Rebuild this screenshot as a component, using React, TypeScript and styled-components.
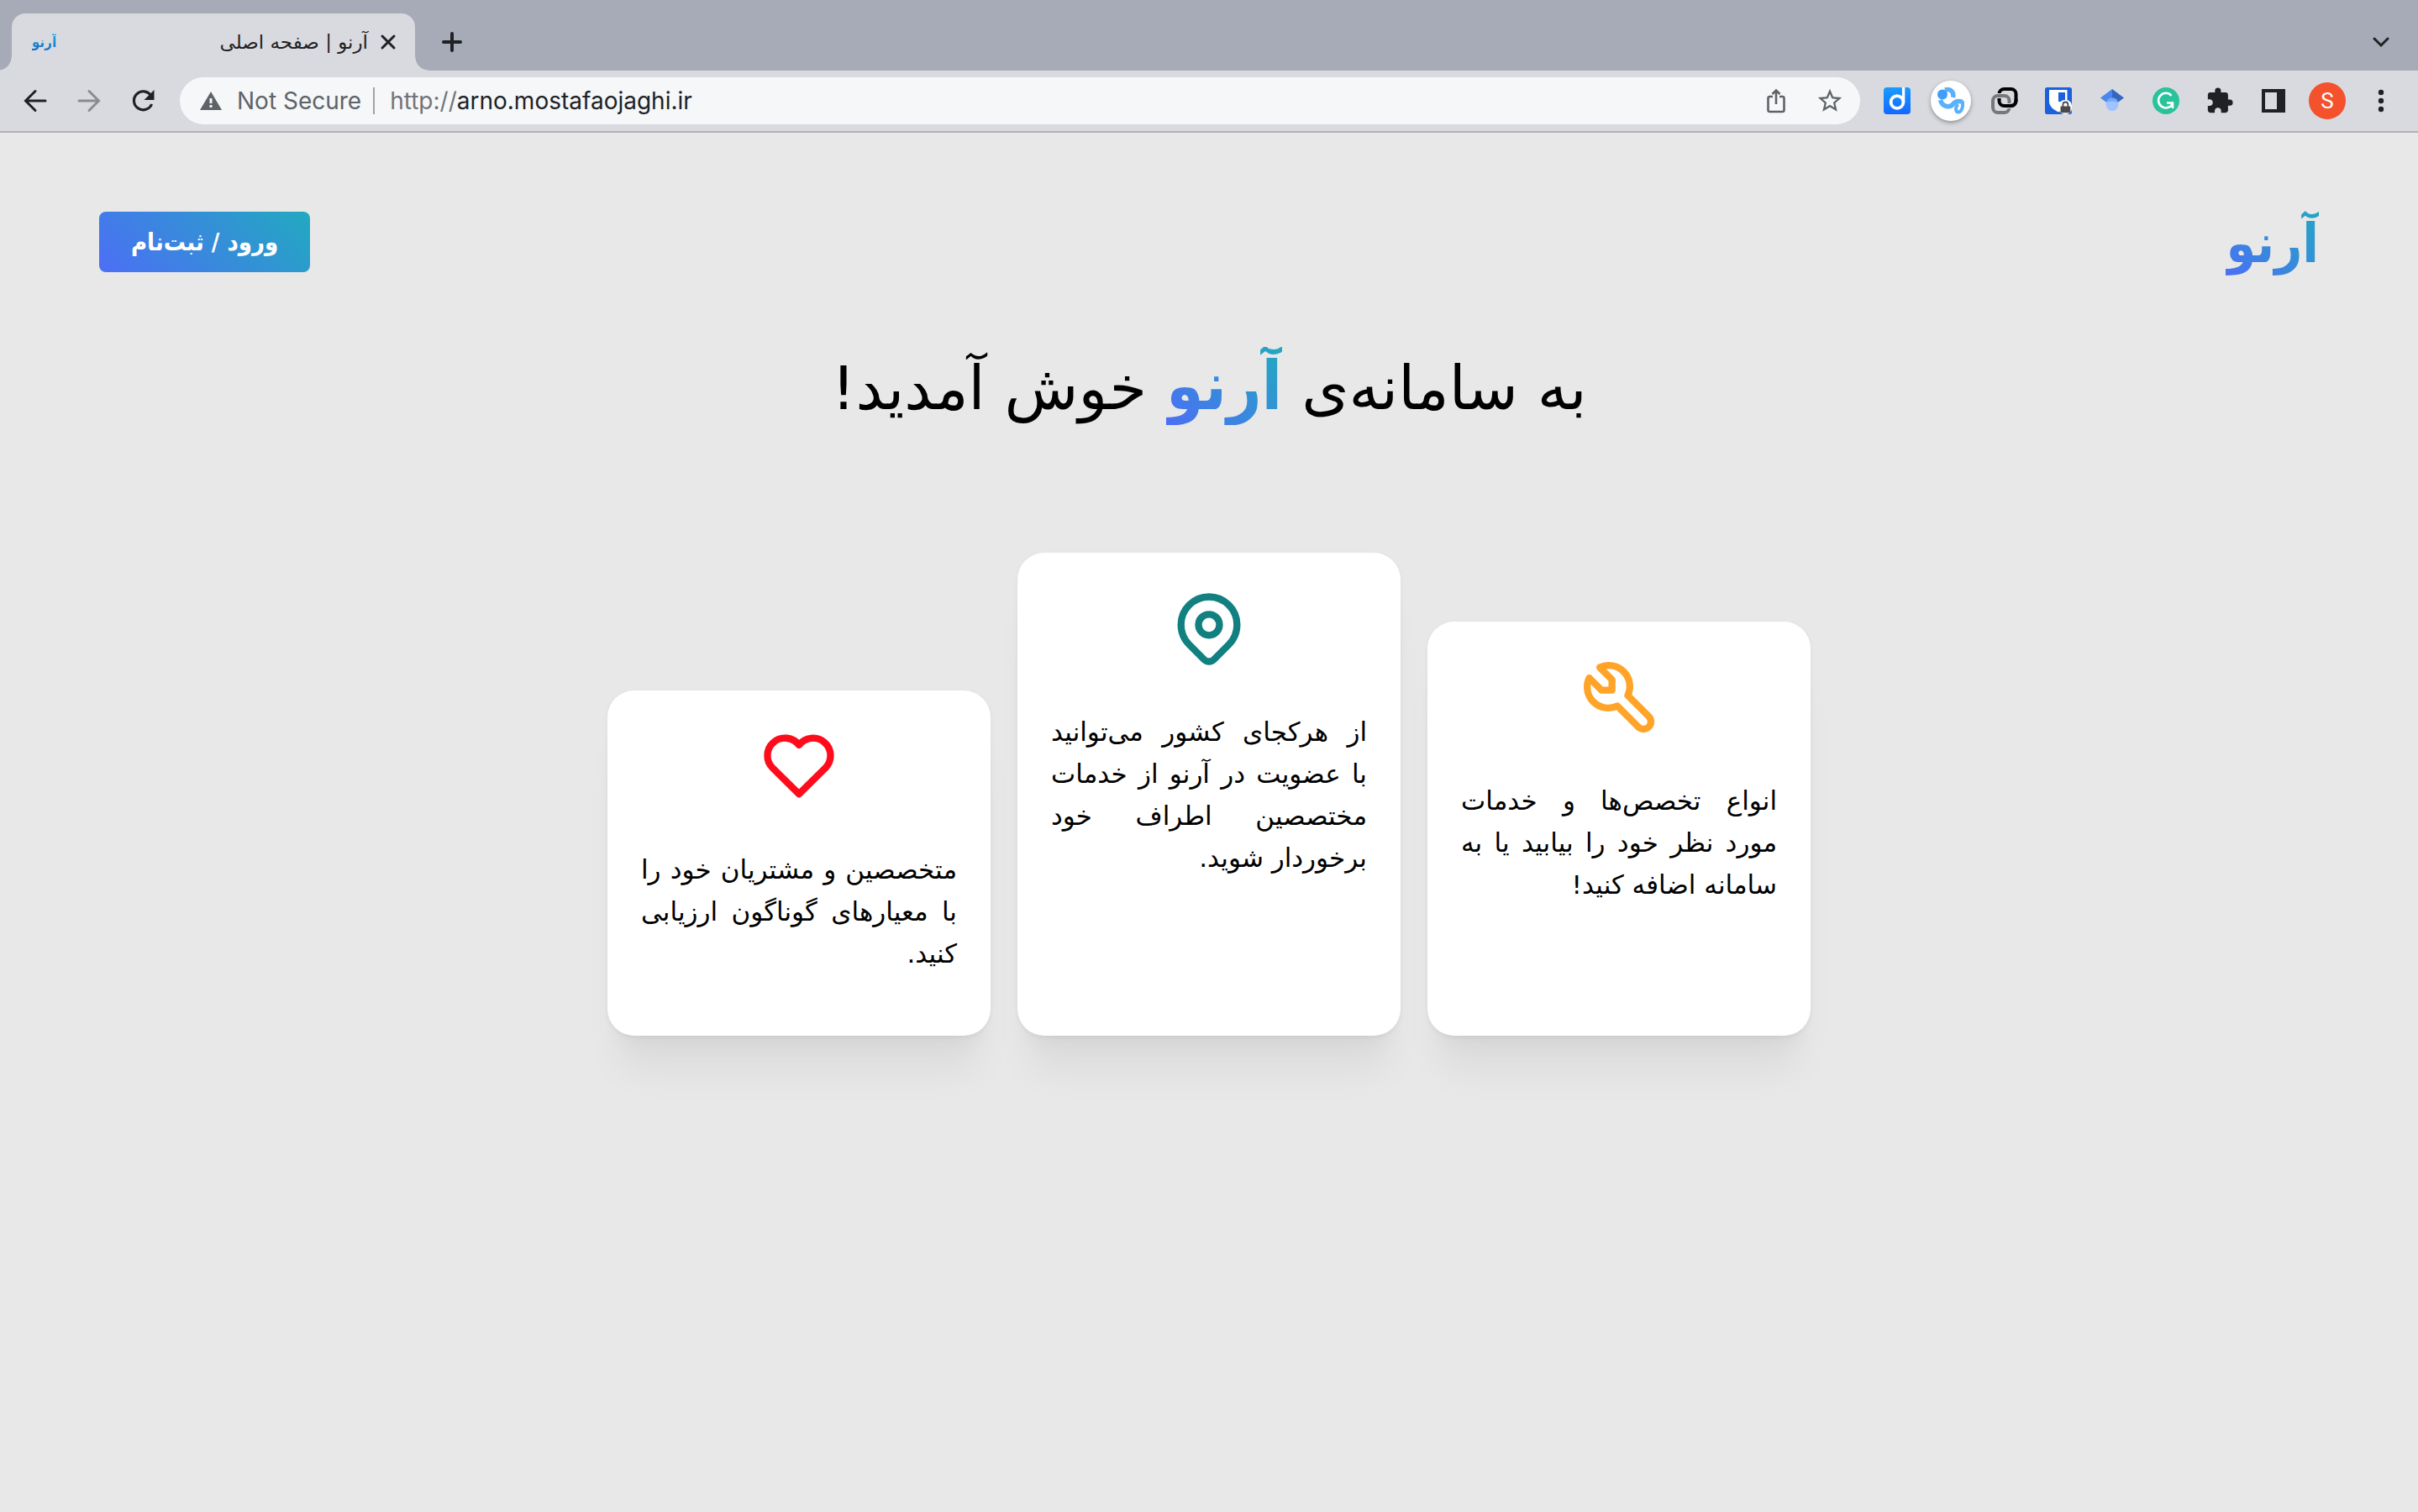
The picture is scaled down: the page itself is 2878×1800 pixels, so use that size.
import React from "react";
import styled, { createGlobalStyle } from "styled-components";

const GlobalStyle = createGlobalStyle`
  *, *::before, *::after { box-sizing: border-box; }
  body { margin: 0; background: #e8e8e8; }
  button, input { font: inherit; color: inherit; border: 0; margin: 0; padding: 0; background: none; }
  button { cursor: pointer; }
  svg { display: block; flex: none; }
`;

const persian = `"DejaVu Sans", "Noto Sans", sans-serif`;
const persianBold = `"DejaVu Sans Condensed", "DejaVu Sans", sans-serif`;
const latin = `Inter, Roboto, "Liberation Sans", sans-serif`;
const brandGradient = "linear-gradient(45deg, #4c6ef5 0%, #22a9c0 100%)";

/* ---------- browser window ---------- */

const TabStrip = styled.div`
  display: flex;
  align-items: flex-end;
  height: 84px;
  padding: 0 22px 0 14px;
  background: #a7abb7;
`;

const Tab = styled.div`
  position: relative;
  display: flex;
  align-items: center;
  width: 480px;
  height: 68px;
  padding: 0 20px 0 24px;
  border-radius: 16px 16px 0 0;
  background: #d9dadf;

  &::before,
  &::after {
    content: "";
    position: absolute;
    bottom: 0;
    width: 16px;
    height: 16px;
  }
  &::before {
    right: 100%;
    background: radial-gradient(circle at 0 0, transparent 15px, #d9dadf 16px);
  }
  &::after {
    left: 100%;
    background: radial-gradient(circle at 100% 0, transparent 15px, #d9dadf 16px);
  }
`;

const Favicon = styled.span`
  font: bold 17px/28px ${persianBold};
  color: transparent;
  background: linear-gradient(#22b8ec, #1560b8);
  background-clip: text;
`;

const TabTitle = styled.span`
  flex: 1;
  padding-right: 12px;
  font: 23px/32px ${persian};
  color: #202124;
  text-align: right;
`;

const IconButton = styled.button<{ $size?: number; $color?: string }>`
  display: flex;
  align-items: center;
  justify-content: center;
  flex: none;
  width: ${(p) => p.$size ?? 64}px;
  height: ${(p) => p.$size ?? 64}px;
  color: ${(p) => p.$color ?? "#202124"};
`;

const NewTab = styled(IconButton)`
  margin: 0 auto 2px 12px;
`;

const TabSearch = styled(IconButton)`
  margin-bottom: 12px;
`;

const Toolbar = styled.div`
  display: flex;
  align-items: center;
  height: 74px;
  padding: 0 12px 0 10px;
  border-bottom: 2px solid #b0b1b5;
  background: #d9dadf;
`;

const Omnibox = styled.form`
  display: flex;
  align-items: center;
  flex: 1;
  height: 56px;
  margin: 0 12px;
  padding: 0 4px 0 24px;
  border-radius: 28px;
  background: #f5f7f9;
  font: 28px/36px ${latin};
`;

const Security = styled.button`
  display: flex;
  align-items: center;
  gap: 18px;
  color: #5f6368;
`;

const Divider = styled.span`
  width: 2px;
  height: 32px;
  margin: 0 18px 0 14px;
  background: #a0a2a6;
`;

const Scheme = styled.label`
  color: #717478;
`;

const Address = styled.input`
  flex: 1;
  min-width: 0;
  color: #202124;
  outline: none;
`;

const Badge = styled.span<{ $size: number; $bg: string; $raised?: boolean }>`
  display: flex;
  align-items: center;
  justify-content: center;
  width: ${(p) => p.$size}px;
  height: ${(p) => p.$size}px;
  border-radius: 50%;
  background: ${(p) => p.$bg};
  color: #fff;
  font: 26px/32px Roboto, sans-serif;
  box-shadow: ${(p) => (p.$raised ? "0 2px 5px rgba(0, 0, 0, 0.35)" : "none")};
`;

/* ---------- site ---------- */

const Page = styled.main`
  padding: 80px 118px;
  font-family: ${persian};
  color: #000;
`;

const Header = styled.header`
  display: flex;
  align-items: center;
  justify-content: space-between;
`;

const Brand = styled.span`
  color: transparent;
  background: ${brandGradient};
  background-clip: text;
  font-family: ${persianBold};
  font-weight: bold;
`;

const Logo = styled(Brand)`
  padding-top: 4px;
  font-size: 64px;
  line-height: 96px;
`;

const LoginButton = styled.button`
  height: 72px;
  padding: 0 38px;
  border-radius: 8px;
  background: ${brandGradient};
  color: #fff;
  font-family: ${persianBold};
  font-size: 29px;
  font-weight: bold;
`;

const Title = styled.h1`
  margin: 66px 0 0;
  font-size: 72px;
  font-weight: normal;
  line-height: 112px;
  text-align: center;
`;

const TitleBrand = styled(Brand)`
  font-size: 80px;
`;

const Cards = styled.section`
  display: flex;
  justify-content: center;
  align-items: flex-end;
  gap: 32px;
  margin-top: 140px;
`;

const Card = styled.article<{ $height: number }>`
  width: 456px;
  min-height: ${(p) => p.$height}px;
  padding: 40px;
  border-radius: 32px;
  background: #fff;
  box-shadow:
    0 2px 6px rgba(0, 0, 0, 0.05),
    0 56px 46px -14px rgba(0, 0, 0, 0.05),
    0 24px 24px -14px rgba(0, 0, 0, 0.04);
`;

const CardIcon = styled.svg<{ $color: string }>`
  width: 100px;
  height: 100px;
  margin: 0 auto 48px;
  fill: none;
  stroke: ${(p) => p.$color};
  stroke-width: 2;
  stroke-linecap: round;
  stroke-linejoin: round;
`;

const CardText = styled.p`
  margin: 0;
  font-size: 31px;
  line-height: 50px;
  text-align: justify;
`;

const features = [
  {
    height: 493,
    color: "#ffa428",
    icon: (
      <path d="M7 10h3v-3l-3.5 -3.5a6 6 0 0 1 8 8l6 6a2 2 0 0 1 -3 3l-6 -6a6 6 0 0 1 -8 -8l3.5 3.5" />
    ),
    text: "انواع تخصص‌ها و خدمات مورد نظر خود را بیابید یا به سامانه اضافه کنید!",
  },
  {
    height: 575,
    color: "#128080",
    icon: (
      <>
        <circle cx="12" cy="11" r="3" />
        <path d="M17.657 16.657l-4.243 4.243a2 2 0 0 1 -2.827 0l-4.244 -4.243a8 8 0 1 1 11.314 0z" />
      </>
    ),
    /* the preposition stays on the line of its noun */
    text: "از هرکجای کشور می‌توانید با\u00a0عضویت در آرنو از خدمات مختصصین اطراف خود برخوردار شوید.",
  },
  {
    height: 411,
    color: "#ff0c1c",
    icon: (
      <path d="M19.5 12.572l-7.5 7.428l-7.5 -7.428m0 0a5 5 0 1 1 7.5 -6.566a5 5 0 1 1 7.5 6.572" />
    ),
    text: "متخصصین و مشتریان خود را با معیارهای گوناگون ارزیابی کنید.",
  },
];

const Line = ({ d, size, width = 4 }: { d: string; size: number; width?: number }) => (
  <svg width={size} height={size} viewBox={`0 0 ${size} ${size}`} fill="none" stroke="currentColor" strokeWidth={width} strokeLinecap="round">
    <path d={d} />
  </svg>
);

const extensions = [
  {
    name: "Dictionary",
    icon: (
      <svg width="32" height="32" viewBox="0 0 32 32">
        <defs>
          <linearGradient id="dict" x1="0" y1="0" x2="0" y2="1">
            <stop offset="0" stopColor="#1a9bff" />
            <stop offset="1" stopColor="#1268ff" />
          </linearGradient>
        </defs>
        <rect width="32" height="32" rx="4" fill="url(#dict)" />
        <circle cx="16" cy="17.500" r="7.400" fill="none" stroke="#fff" strokeWidth="3.800" />
        <path d="M23.600 0v18" stroke="#fff" strokeWidth="3.400" />
      </svg>
    ),
  },
  {
    name: "Chain",
    icon: (
      <Badge $size={48} $bg="#fff" $raised>
        <svg width="32" height="32" viewBox="0 0 32 32" fill="none" stroke="#5bb0fb">
          <path d="M9 3c7-2 11 3 9.500 9M3.500 15c2 8 11 10 15 5 3-4 6-4 11-3" strokeWidth="5.500" />
          <circle cx="6" cy="8.500" r="6" fill="#3f9ff8" stroke="none" />
          <path d="M29.500 16c2 7-1 13-4.500 13.500-4 0-4-7 0-9" strokeWidth="4" />
        </svg>
      </Badge>
    ),
  },
  {
    name: "Links",
    icon: (
      <svg width="32" height="32" viewBox="0 0 32 32" fill="none" strokeWidth="4">
        <rect x="9.500" y="2" width="20" height="20" rx="6" stroke="#000" />
        <path d="M4 12a6 6 0 0 1 4-2h7.500a6 6 0 0 1 5 3" stroke="#d9dadf" strokeWidth="6" />
        <rect x="2" y="10" width="19.500" height="20" rx="6" stroke="#77787b" />
        <path d="M9.500 15v1a6 6 0 0 0 6 6h8" stroke="#d9dadf" strokeWidth="6" />
        <path d="M9.500 14v2a6 6 0 0 0 6 6h8a6 6 0 0 0 6-6v-2" stroke="#000" />
      </svg>
    ),
  },
  {
    name: "Password vault",
    icon: (
      <svg width="32" height="32" viewBox="0 0 32 32">
        <rect width="32" height="32" rx="2.500" fill="#1b60dc" />
        <path d="M5 3h21.500v14c0 6-5 9.500-10.500 12.500C10 26.500 5 22.500 5 17z" fill="#fff" />
        <path d="M16 6h8v11h-8z" fill="#1b60dc" />
        <rect x="16.500" y="15" width="15.500" height="17" rx="7" fill="#fff" />
        <path d="M21.400 23v-2.500a3 3 0 0 1 6 0V23" fill="none" stroke="#4a4a4a" strokeWidth="1.800" />
        <rect x="18.500" y="22.500" width="11.800" height="7.800" rx="1" fill="#4a4a4a" />
      </svg>
    ),
  },
  {
    name: "Scholar",
    icon: (
      <svg width="32" height="32" viewBox="0 0 32 32">
        <path d="M16 2L2 12.500l8 6L16 15z" fill="#4a86ee" />
        <path d="M16 2l14 10.500-8 6L16 15z" fill="#3466bd" />
        <circle cx="16" cy="20.500" r="7.500" fill="#a0c3ff" />
        <path d="M8.800 18a7.500 7.500 0 0 1 14.400 0q-7.200-3-14.400 0z" fill="#76a7fa" />
      </svg>
    ),
  },
  {
    name: "Grammar",
    icon: (
      <Badge $size={32} $bg="#29c39b">
        <svg width="32" height="32" viewBox="0 0 32 32" fill="none" stroke="#fff" strokeWidth="2.600">
          <path d="M22.500 9.800A8.800 8.800 0 1 0 23.800 19.500M17 18.500h7v6.500" />
        </svg>
      </Badge>
    ),
  },
  {
    name: "Extensions",
    icon: (
      <svg width="34" height="34" viewBox="0 0 24 24" fill="#202124">
        <path d="M20.500 11H19V7c0-1.100-.9-2-2-2h-4V3.500a2.500 2.500 0 0 0-5 0V5H4c-1.100 0-1.990.9-1.990 2v3.800H3.500c1.490 0 2.700 1.210 2.700 2.700s-1.210 2.700-2.700 2.700H2V20c0 1.100.9 2 2 2h3.800v-1.500c0-1.490 1.210-2.700 2.700-2.700s2.700 1.210 2.700 2.700V22H17c1.100 0 2-.9 2-2v-4h1.500a2.500 2.500 0 0 0 0-5z" />
      </svg>
    ),
  },
  {
    name: "Side panel",
    icon: (
      <svg width="28" height="28" viewBox="0 0 28 28" fill="#202124" fillRule="evenodd">
        <path d="M0 0h28v28H0zM4 4v20h14V4z" />
      </svg>
    ),
  },
  { name: "Profile", icon: <Badge $size={44} $bg="#f4522d">S</Badge> },
];

export default function App() {
  return (
    <>
      <GlobalStyle />
      <TabStrip>
        <Tab>
          <Favicon dir="rtl">آرنو</Favicon>
          <TabTitle dir="rtl">آرنو | صفحه اصلی</TabTitle>
          <IconButton $size={24} aria-label="Close tab">
            <Line size={20} width={3} d="M3 3L17 17M17 3L3 17" />
          </IconButton>
        </Tab>
        <NewTab aria-label="New tab">
          <Line size={28} d="M14 4v20M4 14h20" />
        </NewTab>
        <TabSearch $size={44} aria-label="Search tabs">
          <Line size={24} width={3} d="M4 8l8 8 8-8" />
        </TabSearch>
      </TabStrip>

      <Toolbar>
        <IconButton aria-label="Back">
          <Line size={28} width={3} d="M26 14H3M14 2.500L2.500 14 14 25.500" />
        </IconButton>
        <IconButton $color="#8b8c91" aria-label="Forward">
          <Line size={28} width={3} d="M2 14h23M14 2.500L25.500 14 14 25.500" />
        </IconButton>
        <IconButton aria-label="Reload">
          <svg width="28" height="28" viewBox="0 0 28 28" fill="none" stroke="currentColor" strokeWidth="3.200">
            <path d="M23.500 7.500A11 11 0 1 0 24.600 18" />
            <path d="M27.500 1v12h-12z" fill="currentColor" stroke="none" />
          </svg>
        </IconButton>

        <Omnibox onSubmit={(e) => e.preventDefault()}>
          <Security type="button">
            <svg width="26" height="24" viewBox="0 0 26 24" fill="currentColor" fillRule="evenodd">
              <path d="M13 1l13 22H0zM11.500 9v6h3V9zM11.500 17v3h3v-3z" />
            </svg>
            Not Secure
          </Security>
          <Divider />
          <Scheme htmlFor="address">http://</Scheme>
          <Address id="address" defaultValue="arno.mostafaojaghi.ir" spellCheck={false} />
          <IconButton type="button" $color="#5f6368" aria-label="Share">
            <svg width="24" height="30" viewBox="0 0 24 30" fill="none" stroke="currentColor" strokeWidth="2.600">
              <path d="M8 10H4.500a2 2 0 0 0-2 2v14a2 2 0 0 0 2 2h15a2 2 0 0 0 2-2V12a2 2 0 0 0-2-2H16M12 19V2.500M7.500 7L12 2.500 16.500 7" />
            </svg>
          </IconButton>
          <IconButton type="button" $color="#5f6368" aria-label="Bookmark">
            <svg width="34" height="34" viewBox="0 0 24 24" fill="currentColor">
              <path d="M22 9.240l-7.190-.62L12 2 9.190 8.630 2 9.240l5.460 4.730L5.820 21 12 17.270 18.180 21l-1.630-7.030L22 9.240zM12 15.400l-3.760 2.270 1-4.280-3.320-2.880 4.380-.38L12 6.100l1.710 4.040 4.380.38-3.320 2.880 1 4.280L12 15.400z" />
            </svg>
          </IconButton>
        </Omnibox>

        {extensions.map((item) => (
          <IconButton key={item.name} aria-label={item.name}>
            {item.icon}
          </IconButton>
        ))}
        <IconButton aria-label="Menu">
          <svg width="8" height="28" viewBox="0 0 8 28" fill="currentColor">
            <circle cx="4" cy="4" r="3.200" />
            <circle cx="4" cy="14" r="3.200" />
            <circle cx="4" cy="24" r="3.200" />
          </svg>
        </IconButton>
      </Toolbar>

      <Page dir="rtl" lang="fa">
        <Header>
          <Logo>آرنو</Logo>
          <LoginButton>ورود / ثبت‌نام</LoginButton>
        </Header>
        <Title>
          به سامانه‌ی <TitleBrand>آرنو</TitleBrand> خوش آمدید!
        </Title>
        <Cards>
          {features.map((feature) => (
            <Card key={feature.color} $height={feature.height}>
              <CardIcon viewBox="0 0 24 24" $color={feature.color} aria-hidden="true">
                {feature.icon}
              </CardIcon>
              <CardText>{feature.text}</CardText>
            </Card>
          ))}
        </Cards>
      </Page>
    </>
  );
}
